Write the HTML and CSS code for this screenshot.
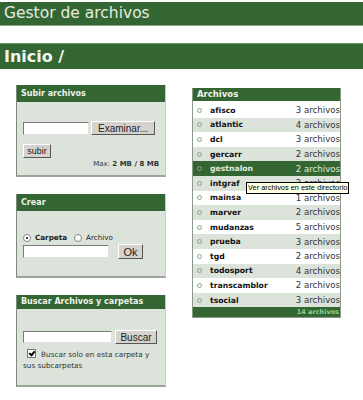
FILE: index.html
```html
<!DOCTYPE html>
<html lang="es">
<head>
    <meta charset="UTF-8">
    <title>Gestor de archivos</title>
    <link rel="stylesheet" href="styles.css">
</head>
<body>

    <div class="top-bar">Gestor de archivos</div>
    <div class="path-bar">Inicio /</div>

    <div class="main">
        <div class="left-col">
            <div class="panel panel-upload">
                <div class="panel-title">Subir archivos</div>
                <div class="panel-body">
                    <div class="row">
                        <input type="text" class="txt txt-file">
                        <button class="btn btn-browse">Examinar...</button>
                    </div>
                    <button class="btn btn-small">subir</button>
                    <div class="max">Max: <b>2 MB / 8 MB</b></div>
                </div>
            </div>

            <div class="panel panel-create">
                <div class="panel-title">Crear</div>
                <div class="panel-body">
                    <div class="radios">
                        <span class="radio on"></span> <b>Carpeta</b>
                        <span class="radio"></span> Archivo
                    </div>
                    <div class="row">
                        <input type="text" class="txt txt-create">
                        <button class="btn btn-ok">Ok</button>
                    </div>
                </div>
            </div>

            <div class="panel panel-search">
                <div class="panel-title">Buscar Archivos y carpetas</div>
                <div class="panel-body">
                    <div class="row">
                        <input type="text" class="txt txt-search">
                        <button class="btn btn-search">Buscar</button>
                    </div>
                    <div class="check-line">
                        <span class="check"></span>Buscar solo en esta carpeta y sus subcarpetas
                    </div>
                </div>
            </div>
        </div>

        <div class="right-col">
            <div class="files">
                <div class="files-title">Archivos</div>
                <div class="file"><span class="dot"></span><span class="name">afisco</span><span class="count">3 archivos</span></div>
                <div class="file alt"><span class="dot"></span><span class="name">atlantic</span><span class="count">4 archivos</span></div>
                <div class="file"><span class="dot"></span><span class="name">dcl</span><span class="count">3 archivos</span></div>
                <div class="file alt"><span class="dot"></span><span class="name">gercarr</span><span class="count">2 archivos</span></div>
                <div class="file active"><span class="dot"></span><span class="name">gestnalon</span><span class="count">2 archivos</span></div>
                <div class="file alt tip-host"><span class="dot"></span><span class="name">intgraf</span><span class="count">2 archivos</span>
                    <div class="tooltip">Ver archivos en este directorio</div>
                </div>
                <div class="file"><span class="dot"></span><span class="name">mainsa</span><span class="count">1 archivos</span></div>
                <div class="file alt"><span class="dot"></span><span class="name">marver</span><span class="count">2 archivos</span></div>
                <div class="file"><span class="dot"></span><span class="name">mudanzas</span><span class="count">5 archivos</span></div>
                <div class="file alt"><span class="dot"></span><span class="name">prueba</span><span class="count">3 archivos</span></div>
                <div class="file"><span class="dot"></span><span class="name">tgd</span><span class="count">2 archivos</span></div>
                <div class="file alt"><span class="dot"></span><span class="name">todosport</span><span class="count">4 archivos</span></div>
                <div class="file"><span class="dot"></span><span class="name">transcamblor</span><span class="count">2 archivos</span></div>
                <div class="file alt"><span class="dot"></span><span class="name">tsocial</span><span class="count">3 archivos</span></div>
                <div class="files-foot">14 archivos</div>
            </div>
        </div>
    </div>

</body>
</html>
```

FILE: styles.css
```css
body {
    margin: 0;
    padding: 2px 0 0 0;
    background-color: #ffffff;
    font-family: "DejaVu Sans", Verdana, sans-serif;
    color: #000;
}

.top-bar {
    height: 23px;
    line-height: 23px;
    background-color: #336633;
    border-bottom: 1px solid #8aa886;
    color: #e4ece2;
    font-size: 15.5px;
    padding-left: 4px;
}

.path-bar {
    margin-top: 17px;
    height: 25px;
    line-height: 25px;
    background-color: #336633;
    border-top: 1px solid #6f946b;
    color: #f2f6f0;
    font-size: 16px;
    font-weight: bold;
    padding-left: 4px;
}

.main {
    display: flex;
    padding-left: 16px;
    margin-top: 16px;
}

.left-col {
    width: 150px;
    display: flex;
    flex-direction: column;
}

.right-col {
    width: 150px;
    margin-left: 26px;
    padding-top: 3px;
}

/* panels */
.panel {
    background-color: #dce3db;
    border-left: 1px solid #7d8a7b;
    border-bottom: 2px solid #9aa598;
    border-right: 1px solid #c8d0c6;
    box-sizing: border-box;
}

.panel-title {
    background-color: #336633;
    color: #eef3ea;
    font-size: 8px;
    font-weight: bold;
    height: 17px;
    line-height: 17px;
    padding-left: 4px;
}

.panel-body {
    padding: 0 6px;
    font-size: 7px;
}

.panel-upload { height: 92px; }
.panel-create { height: 84px; margin-top: 17px; }
.panel-search { height: 92px; margin-top: 17px; }

.panel-search .panel-title { height: 14px; line-height: 14px; }

.row {
    display: flex;
    align-items: center;
}

.txt {
    height: 13px;
    border: 1px solid #7a7a7a;
    border-right-color: #e0e0e0;
    border-bottom-color: #e0e0e0;
    background: #fff;
    padding: 0;
    margin: 0;
    box-sizing: border-box;
}

.btn {
    font-family: "Liberation Sans", Arial, sans-serif;
    font-size: 10px;
    color: #222;
    background-color: #d6d3ce;
    border: 1px solid;
    border-color: #fff #555 #555 #fff;
    padding: 0;
    margin: 0;
    box-sizing: border-box;
}

.panel-upload .row { margin-top: 19px; }
.txt-file { width: 66px; }
.btn-browse { width: 64px; height: 14px; margin-left: 2px; }
.btn-small { width: 28px; height: 14px; margin-top: 9px; font-size: 9px; }

.max {
    text-align: right;
    font-size: 7px;
    color: #333;
    margin-top: 2px;
}

.radios {
    margin-top: 22px;
    font-size: 7.2px;
    display: flex;
    align-items: center;
    gap: 4px;
    color: #222;
}

.radios b { margin-right: 3px; }

.radio {
    display: inline-block;
    width: 6px;
    height: 6px;
    border-radius: 50%;
    border: 1px solid #888;
    background: #fff;
    position: relative;
}

.radio.on::after {
    content: "";
    position: absolute;
    left: 2px;
    top: 2px;
    width: 2px;
    height: 2px;
    background: #000;
    border-radius: 50%;
}

.panel-create .row { margin-top: 2px; }
.txt-create { width: 86px; }
.btn-ok { width: 25px; height: 15px; margin-left: 9px; font-size: 11px; }

.panel-search .row { margin-top: 21px; }
.txt-search { width: 89px; height: 12px; }
.btn-search { width: 42px; height: 14px; margin-left: 3px; font-size: 10px; }

.check-line {
    margin-top: 5px;
    padding-right: 4px;
    font-size: 7.3px;
    line-height: 11px;
    color: #333;
}

.check {
    display: inline-block;
    width: 7px;
    height: 7px;
    box-sizing: content-box;
    background: #fff;
    border: 1px solid #777;
    margin: 0 5px 0 4px;
    vertical-align: -1px;
    position: relative;
}

.check::after {
    content: "";
    position: absolute;
    left: 2px;
    top: 0;
    width: 2px;
    height: 4px;
    border: solid #000;
    border-width: 0 2px 2px 0;
    transform: rotate(40deg);
}

/* file list */
.files {
    width: 149px;
    border: 1px solid #8a9a88;
    border-top: none;
    box-sizing: border-box;
}

.files-title {
    background-color: #336633;
    color: #eef3ea;
    font-size: 8.5px;
    font-weight: bold;
    height: 13px;
    line-height: 13px;
    padding-left: 4px;
    border-bottom: 2px solid #fff;
}

.file {
    display: flex;
    align-items: center;
    height: 14.6px;
    background-color: #ffffff;
}

.file.alt { background-color: #dce3db; }

.file.active { background-color: #336633; }

.dot {
    width: 3px;
    height: 3px;
    border: 1px solid #8fa08c;
    border-radius: 50%;
    margin: 0 8px 0 4px;
}

.name {
    flex: 1;
    font-size: 7.7px;
    font-weight: bold;
    color: #111;
}

.count {
    font-size: 8.6px;
    color: #333;
}

.file.active .name,
.file.active .count { color: #e2ecde; }

.files-foot {
    background-color: #336633;
    color: #8fd08a;
    font-size: 6.5px;
    font-weight: bold;
    height: 10px;
    line-height: 10px;
    text-align: right;
    padding-right: 1px;
}

.tip-host { position: relative; }

.tooltip {
    position: absolute;
    left: 53px;
    top: 6px;
    background: #ffffe1;
    border: 1px solid #000;
    font-family: "Liberation Sans", Arial, sans-serif;
    font-size: 7.4px;
    line-height: 10px;
    padding: 0 1px;
    white-space: nowrap;
    color: #000;
}
```
